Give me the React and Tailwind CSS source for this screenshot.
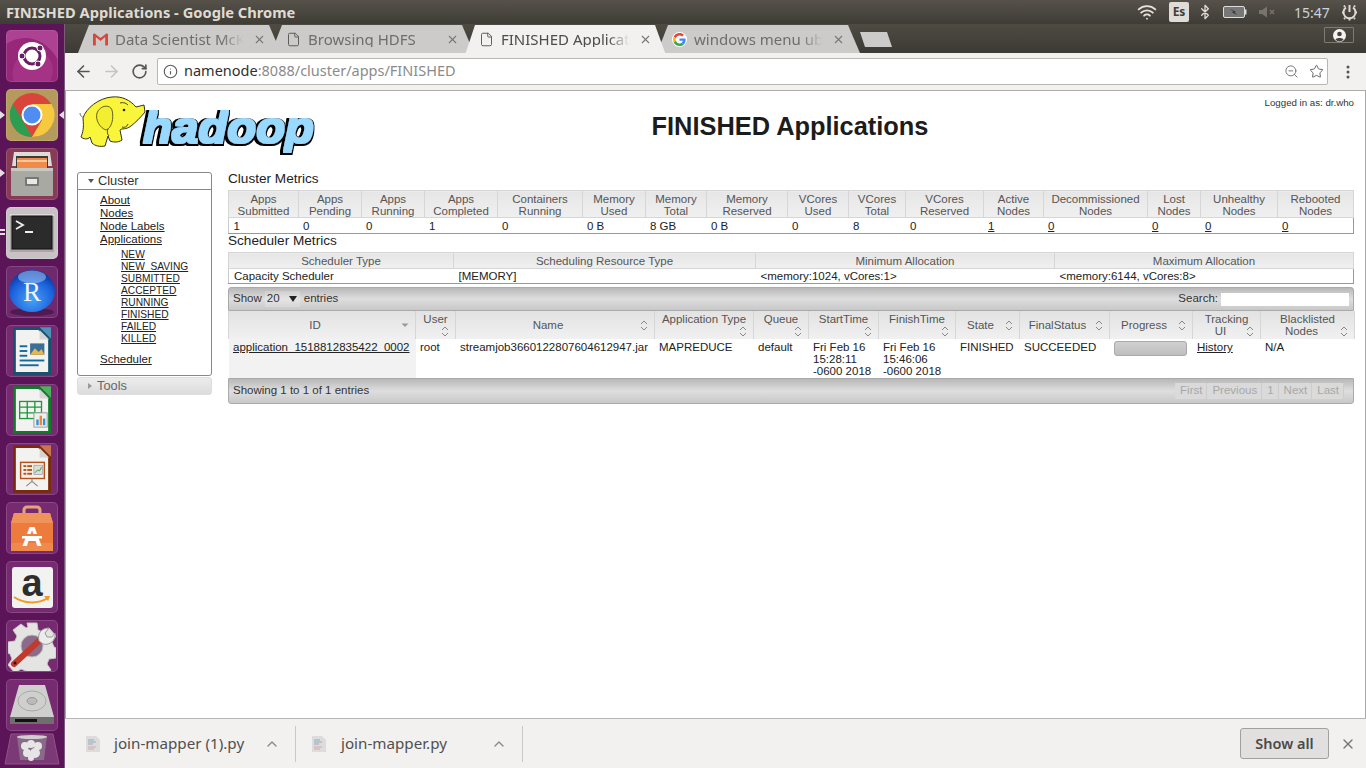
import React from 'react';
import { ArrowLeft, ArrowRight, RotateCw, Info, ZoomOut, Star, X, ChevronUp, File, Bluetooth, Wifi } from 'lucide-react';

const clusterCols = [70, 63, 63, 73, 85, 63, 61, 81, 61, 57, 78, 60, 104, 53, 77, 76];
const clusterHead = [
  ['Apps', 'Submitted'], ['Apps', 'Pending'], ['Apps', 'Running'], ['Apps', 'Completed'], ['Containers', 'Running'],
  ['Memory', 'Used'], ['Memory', 'Total'], ['Memory', 'Reserved'], ['VCores', 'Used'], ['VCores', 'Total'],
  ['VCores', 'Reserved'], ['Active', 'Nodes'], ['Decommissioned', 'Nodes'], ['Lost', 'Nodes'], ['Unhealthy', 'Nodes'], ['Rebooted', 'Nodes'],
];
const clusterRow = ['1', '0', '0', '1', '0', '0 B', '8 GB', '0 B', '0', '8', '0', '1', '0', '0', '0', '0'];

const schedCols = [225, 302, 299, 299];
const appCols = [187, 40, 199, 99, 55, 70, 77, 64, 90, 83, 68, 94];
const appHead = [
  ['ID'], ['User'], ['Name'], ['Application Type'], ['Queue'], ['StartTime'], ['FinishTime'],
  ['State'], ['FinalStatus'], ['Progress'], ['Tracking', 'UI'], ['Blacklisted', 'Nodes'],
];

const sublinks = ['NEW', 'NEW_SAVING', 'SUBMITTED', 'ACCEPTED', 'RUNNING', 'FINISHED', 'FAILED', 'KILLED'];

function SortIcon({ active, middle }) {
  if (active) {
    return <svg width="8" height="10" viewBox="0 0 8 10" className="absolute right-[6px] bottom-[9px]"><path d="M0.5 3.5h7L4 7z" fill="#999" /></svg>;
  }
  return (
    <svg width="8" height="11" viewBox="0 0 8 11" className={`absolute right-[6px] ${middle ? 'bottom-[8px]' : 'bottom-[2px]'}`} fill="none" stroke="#888" strokeWidth="1">
      <path d="M1 4l3-3 3 3M1 7l3 3 3-3" />
    </svg>
  );
}

function Tile({ bg, children }) {
  return (
    <div className={`relative w-[52px] h-[52px] rounded-[5px] flex items-center justify-center overflow-hidden shadow-[inset_0_0_0_1px_rgba(255,255,255,0.14)] ${bg}`}>
      {children}
    </div>
  );
}

function UbuntuIcon() {
  return (
    <svg width="52" height="52" viewBox="0 0 52 52">
      <path d="M0 14C18 2 40 8 52 30V0H0z" fill="#c05aa6" opacity=".55" />
      <path d="M8 52C2 34 16 18 34 22 46 26 50 38 44 52z" fill="#b13f92" opacity=".5" />
      <circle cx="26" cy="26" r="14" fill="#fff" />
      <circle cx="26" cy="26" r="8" fill="none" stroke="#6b1e63" strokeWidth="3" />
      <circle cx="34" cy="18" r="3" fill="#6b1e63" stroke="#fff" />
      <circle cx="16" cy="26" r="3" fill="#6b1e63" stroke="#fff" />
      <circle cx="32" cy="34" r="3" fill="#6b1e63" stroke="#fff" />
    </svg>
  );
}

function ChromeIcon() {
  return (
    <svg width="46" height="46" viewBox="0 0 46 46">
      <circle cx="23" cy="23" r="22" fill="#d9453a" />
      <path d="M23 12h19.500A22 22 0 0 1 23 45L33 28z" fill="#f7c93e" />
      <path d="M3.900 12L14 29l9 16A22 22 0 0 1 3.900 12z" fill="#2c9e52" />
      <circle cx="23" cy="23" r="10.500" fill="#fff" />
      <circle cx="23" cy="23" r="8.500" fill="#4f8ef0" />
    </svg>
  );
}

function FilesIcon() {
  return (
    <svg width="46" height="46" viewBox="0 0 46 46">
      <path d="M5 1h36l2 14H3z" fill="#dcdcd8" />
      <rect x="7" y="5" width="32" height="13" fill="#3d3a38" />
      <rect x="8" y="7" width="30" height="11" fill="#f08a4a" />
      <rect x="8" y="9" width="30" height="2" fill="#f6c79a" />
      <rect x="2" y="17" width="42" height="28" rx="1" fill="#a9a9a4" />
      <rect x="2" y="17" width="42" height="3" fill="#c8c8c3" />
      <rect x="16" y="26" width="14" height="9" rx="1" fill="#777" />
      <rect x="18" y="28" width="10" height="5" fill="#e8e8e6" />
    </svg>
  );
}

function TerminalIcon() {
  return (
    <svg width="44" height="38" viewBox="0 0 44 38">
      <rect x="0" y="0" width="44" height="38" fill="#a9a6a3" />
      <rect x="0" y="0" width="44" height="2" fill="#dcd9d7" />
      <rect x="2" y="2" width="40" height="33" fill="#2b2b2b" stroke="#111" />
      <path d="M6 7l7 4-7 4" fill="none" stroke="#eee" strokeWidth="1.800" />
      <path d="M15 18h8" stroke="#eee" strokeWidth="2" />
    </svg>
  );
}

function RIcon() {
  return (
    <svg width="48" height="50" viewBox="0 0 48 50">
      <defs>
        <radialGradient id="rball" cx="50%" cy="70%" r="65%">
          <stop offset="0%" stopColor="#46a3f7" />
          <stop offset="70%" stopColor="#1c62dc" />
          <stop offset="100%" stopColor="#0c3aa6" />
        </radialGradient>
      </defs>
      <ellipse cx="24" cy="45" rx="22" ry="4" fill="#3a1040" opacity=".6" />
      <ellipse cx="24" cy="24" rx="23" ry="21" fill="url(#rball)" />
      <ellipse cx="24" cy="10" rx="14" ry="6.500" fill="#a5c9f2" opacity=".55" />
      <text x="24" y="34" textAnchor="middle" fontFamily="'Liberation Serif', serif" fontSize="27" fill="#f2f5fa">R</text>
    </svg>
  );
}

function DocShell({ color, corner, children }) {
  return (
    <svg width="38" height="50" viewBox="0 0 40 50">
      <path d="M1.500 1.500h26l11 11v36h-37z" fill="#f2f2f0" stroke={color} strokeWidth="3" />
      <path d="M28 0l12 12V0z" fill={corner} />
      <path d="M28 3v10h10" fill="#d5d5d3" />
      {children}
    </svg>
  );
}

function WriterIcon() {
  return (
    <DocShell color="#13536f" corner="#4d93b5">
      <g fill="#13699a">
        <rect x="7" y="19" width="8" height="2" /><rect x="7" y="24" width="8" height="2" /><rect x="7" y="29" width="8" height="2" />
        <rect x="7" y="34" width="26" height="2" /><rect x="7" y="39" width="20" height="2" />
      </g>
      <rect x="18" y="17" width="15" height="12" fill="#3a6f99" />
      <path d="M18 29l5-7 4 4 3-3 3 6z" fill="#e8b64a" />
    </DocShell>
  );
}

function CalcIcon() {
  return (
    <DocShell color="#0f7a2a" corner="#4cb05e">
      <g fill="none" stroke="#1b9a3a" strokeWidth="1.400">
        <rect x="7" y="16" width="23" height="18" />
        <path d="M7 22h23M7 28h23M15 16v18M23 16v18" />
      </g>
      <rect x="22" y="28" width="14" height="15" fill="#eee" stroke="#999" />
      <rect x="24.500" y="35" width="2.500" height="6" fill="#3a8fd0" />
      <rect x="28" y="31" width="2.500" height="10" fill="#e88a2a" />
      <rect x="31.500" y="34" width="2.500" height="7" fill="#3a8fd0" />
    </DocShell>
  );
}

function ImpressIcon() {
  return (
    <DocShell color="#7a2c08" corner="#c9774a">
      <rect x="8" y="18" width="25" height="17" fill="#f5f0ea" stroke="#b4511c" strokeWidth="1.500" />
      <g fill="#b4511c">
        <rect x="11" y="21" width="3" height="2" /><rect x="15" y="21" width="5" height="2" />
        <rect x="11" y="25" width="3" height="2" /><rect x="15" y="25" width="5" height="2" />
        <rect x="11" y="29" width="3" height="2" /><rect x="15" y="29" width="5" height="2" />
      </g>
      <rect x="22" y="21" width="9" height="10" fill="#ddd" stroke="#888" strokeWidth=".6" />
      <path d="M23 29l3-3 2 1 2-4" fill="none" stroke="#3a9a3a" strokeWidth="1" />
      <path d="M20 35v3M20 38l-6 5M20 38l6 5" stroke="#888" strokeWidth="1.200" />
    </DocShell>
  );
}

function SoftwareIcon() {
  return (
    <svg width="42" height="46" viewBox="0 0 42 46">
      <path d="M13 9V5a3 3 0 0 1 3-3h10a3 3 0 0 1 3 3v4" fill="none" stroke="#e8a37a" strokeWidth="3" />
      <path d="M3 8h36l3 10v28H0V18z" fill="#ed7b3c" />
      <path d="M3 8h36l3 10H0z" fill="#f0935b" />
      <rect x="0" y="38" width="42" height="8" fill="#ef8a4c" />
      <text x="21" y="41" textAnchor="middle" fontFamily="'Liberation Sans', sans-serif" fontWeight="700" fontSize="28" fill="#fff">A</text>
      <rect x="11" y="29" width="20" height="2" fill="#ed7b3c" />
      <rect x="11" y="31" width="20" height="2.500" fill="#fff" />
    </svg>
  );
}

function AmazonIcon() {
  return (
    <div className="w-[41px] h-[41px] rounded-[3px] bg-[#f2f2f0] flex flex-col items-center justify-center relative">
      <span className="font-['Liberation_Sans',sans-serif] font-bold text-[38px] leading-[30px] text-[#2d2d2d] mt-[-8px]">a</span>
      <svg width="38" height="10" viewBox="0 0 38 10" className="absolute bottom-[3px]">
        <path d="M1 2c10 7 24 7 34 1" fill="none" stroke="#f39a1e" strokeWidth="2" />
        <path d="M31 1l6 0-2 5z" fill="#f39a1e" />
      </svg>
    </div>
  );
}

function SettingsIcon() {
  return (
    <svg width="48" height="50" viewBox="0 0 48 50">
      <path d="M19 2h10l1 7 5 2 6-4 7 8-4 6 2 5 2 1v10l-7 1-2 5 4 6-8 6-5-4-5 2-1 3H19l-1-6-5-2-6 4-7-8 4-6-2-5-2-1V21l7-1 2-5-4-6 8-6 5 4 2-1z" fill="#e4e4e2" stroke="#c8c8c6" />
      <circle cx="24" cy="25" r="11" fill="#8c6a8a" stroke="#bdbdbb" />
      <path d="M6 43L33 18" stroke="#c23a2e" strokeWidth="6" strokeLinecap="round" />
      <path d="M31 20c-2-7 2-13 10-13l-4 5 2 4 5 0 3-4c1 7-5 13-12 11z" fill="#ececea" stroke="#999" />
      <circle cx="7" cy="42" r="1.500" fill="#3d0f0b" />
    </svg>
  );
}

function DriveIcon() {
  return (
    <svg width="46" height="44" viewBox="0 0 46 44">
      <path d="M10 2h26l9 32H1z" fill="#cfcfcd" />
      <ellipse cx="23" cy="18" rx="14" ry="10" fill="none" stroke="#aaa" />
      <ellipse cx="23" cy="18" rx="5" ry="3.500" fill="#bbb" stroke="#999" />
      <path d="M1 34h44v7H1z" fill="#6e6e6c" />
      <path d="M6 36h22v3H6z" fill="#111" />
    </svg>
  );
}

function TrashTile() {
  return (
    <div className="relative w-[56px] h-[33px] -mt-[5px]">
      <svg width="56" height="33" viewBox="0 0 56 33">
        <path d="M7 1h42l6 30H1z" fill="#7b3a76" stroke="#8e5288" />
        <path d="M13 3h30l-3 24H16z" fill="#8a6a88" />
        <ellipse cx="28" cy="4" rx="15" ry="2" fill="#cfcfcf" />
        <g fill="#e6e6e6">
          <circle cx="21" cy="13" r="4" /><circle cx="27" cy="11" r="4" /><circle cx="34" cy="13" r="4" />
          <circle cx="23" cy="20" r="4" /><circle cx="31" cy="20" r="5" /><circle cx="27" cy="25" r="3" />
        </g>
      </svg>
    </div>
  );
}

function Launcher() {
  return (
    <div className="relative w-[65px] shrink-0 bg-[#5c1458] border-r border-r-[#7d5b7a] flex flex-col items-center pt-[6px] gap-[7px] overflow-hidden">
      <Tile bg="bg-[#962779]"><UbuntuIcon /></Tile>
      <Tile bg="bg-[#b49a5c]"><ChromeIcon /></Tile>
      <Tile bg="bg-[#893a56]"><FilesIcon /></Tile>
      <Tile bg="bg-[#c8c2c6]"><TerminalIcon /></Tile>
      <Tile bg="bg-[#6e2a6c]"><RIcon /></Tile>
      <Tile bg="bg-[#762a70]"><WriterIcon /></Tile>
      <Tile bg="bg-[#762a70]"><CalcIcon /></Tile>
      <Tile bg="bg-[#762a70]"><ImpressIcon /></Tile>
      <Tile bg="bg-[#762a70]"><SoftwareIcon /></Tile>
      <Tile bg="bg-[#762a70]"><AmazonIcon /></Tile>
      <Tile bg="bg-[#762a70]"><SettingsIcon /></Tile>
      <Tile bg="bg-[#762a70]"><DriveIcon /></Tile>
      <TrashTile />
      {/* running pips */}
      <span className="absolute left-0 top-[87px] w-0 h-0 border-y-[4px] border-y-transparent border-l-[5px] border-l-[#e6e0e4]" />
      <span className="absolute right-0 top-[87px] w-0 h-0 border-y-[4px] border-y-transparent border-r-[5px] border-r-[#e6e0e4]" />
      <span className="absolute left-0 top-[145px] w-0 h-0 border-y-[4px] border-y-transparent border-l-[5px] border-l-[#e6e0e4]" />
      <span className="absolute left-0 top-[205px] w-[5px] h-[2px] bg-[#e6e0e4]" />
      <span className="absolute left-0 top-[209px] w-[5px] h-[2px] bg-[#e6e0e4]" />
    </div>
  );
}

function GmailIcon() {
  return (
    <svg width="15" height="13" viewBox="0 0 16 13" className="shrink-0">
      <path d="M0 1.500h3V13H1a1 1 0 0 1-1-1zM13 13V1.500h3V12a1 1 0 0 1-1 1z" fill="#d6483b" />
      <path d="M0 1.500C0 0 1.600-.3 2.500.5L8 5l5.500-4.500C14.400-.3 16 0 16 1.500L8 8z" fill="#d6483b" />
    </svg>
  );
}

function GoogleIcon() {
  return (
    <span className="w-[15px] h-[15px] rounded-full bg-white flex items-center justify-center shrink-0">
      <svg width="13" height="13" viewBox="0 0 48 48">
        <path fill="#EA4335" d="M24 9.500c3.500 0 6.700 1.200 9.200 3.600l6.900-6.900C35.900 2.400 30.500 0 24 0 14.600 0 6.500 5.400 2.600 13.200l8 6.200C12.500 13.700 17.800 9.500 24 9.500z" />
        <path fill="#4285F4" d="M46.500 24.500c0-1.600-.1-3.100-.4-4.500H24v9h12.700c-.6 2.900-2.200 5.400-4.700 7.100l7.700 6C44.100 38 46.500 31.800 46.500 24.500z" />
        <path fill="#FBBC05" d="M10.500 28.600c-.5-1.400-.8-3-.8-4.600s.3-3.200.8-4.600l-8-6.200C.9 16.500 0 20.100 0 24s.9 7.500 2.600 10.800z" />
        <path fill="#34A853" d="M24 48c6.500 0 11.900-2.100 15.900-5.900l-7.700-6c-2.200 1.400-4.900 2.300-8.200 2.300-6.200 0-11.500-4.200-13.400-9.800l-8 6.200C6.500 42.600 14.600 48 24 48z" />
      </svg>
    </span>
  );
}

function Tab({ icon, title, active, textW = 'w-[138px]' }) {
  return (
    <div className={`relative w-[203px] -mr-[10px] shrink-0 [clip-path:polygon(11px_0,191px_0,203px_100%,0_100%)] flex items-start pl-[15px] pr-[15px] ${active ? 'h-[33px] z-10 bg-[#f2f1f0] text-[#4c4c4c]' : 'h-[28px] bg-[#cdcbc9] text-[#6d6d6d]'}`}>
      <div className="flex items-center gap-[7px] w-[173px] mt-[6px]">
        {icon}
        <span className={`${textW} overflow-hidden whitespace-nowrap text-[15px] leading-[16px] [mask-image:linear-gradient(90deg,#000_82%,transparent_98%)]`}>{title}</span>
        <X size={13} strokeWidth={2} className="text-[#777] ml-auto shrink-0" />
      </div>
    </div>
  );
}

function TitleBar() {
  return (
    <div className="h-[24px] shrink-0 flex items-center bg-gradient-to-b from-[#56524a] to-[#3e3c36] pl-[6px] pr-[8px] text-[#dfdbd2]">
      <span className="font-bold text-[14.700px]">FINISHED Applications - Google Chrome</span>
      <div className="ml-auto flex items-center">
        <Wifi size={20} strokeWidth={2.200} className="text-[#e8e4dc] mr-[12px]" />
        <span className="w-[20px] h-[20px] rounded-[2px] bg-[#dfdcd7] text-[#3f3d38] text-[12px] font-bold flex items-center justify-center mr-[8px]">Es</span>
        <Bluetooth size={16} className="text-[#dfdbd2] mr-[10px]" />
        <svg width="24" height="12" viewBox="0 0 24 12" className="mr-[12px]">
          <rect x=".5" y=".5" width="21" height="11" rx="1.500" fill="#777" stroke="#ddd" />
          <rect x="22" y="3.500" width="1.500" height="5" fill="#ddd" />
          <path d="M7 3l6 3-2 .5L15 9 9 6.500l2-.5z" fill="#222" />
        </svg>
        <svg width="18" height="12" viewBox="0 0 18 12" className="mr-[17px]">
          <path d="M0 4h3l5-3.500v11L3 8H0z" fill="#77746c" />
          <path d="M11 4l4 4M15 4l-4 4" stroke="#77746c" strokeWidth="1.500" />
        </svg>
        <span className="text-[14px] text-[#c8d4de] w-[36px] mr-[11px]">15:47</span>
        <svg width="17" height="17" viewBox="0 0 17 17" fill="none" stroke="#dfdbd2" strokeWidth="2">
          <path d="M5 3.500a6 6 0 1 0 7 0" />
          <path d="M8.500 1v7" />
          <path d="M3 1.500L4 3M14 1.500L13 3M1 8.500h1.500M14.500 8.500H16M3 15l1-1M14 15l-1-1M8.500 15v1.500" />
        </svg>
      </div>
    </div>
  );
}

function ChromeBar() {
  return (
    <div className="shrink-0">
      <div className="h-[29px] bg-gradient-to-b from-[#4e4b43] to-[#3c3a34] flex items-start pt-[1px] pl-[13px] pr-[12px]">
        <Tab title="Data Scientist McKi" textW="w-[139px]" icon={<GmailIcon />} />
        <Tab title="Browsing HDFS" textW="w-[139px]" icon={<File size={15} strokeWidth={1.500} className="shrink-0 text-[#555]" />} />
        <Tab active title="FINISHED Applicati" textW="w-[139px]" icon={<File size={15} strokeWidth={1.500} className="shrink-0 text-[#555]" />} />
        <Tab title="windows menu ubu" textW="w-[137px]" icon={<GoogleIcon />} />
        <span className="ml-[10px] mt-[7px] w-[32px] h-[15px] bg-[#cdcbc9] [clip-path:polygon(0_0,27px_0,32px_100%,5px_100%)]" />
        <span className="ml-auto mt-[2px] w-[30px] h-[16px] rounded-[1px] border border-[#7e7b73] flex items-center justify-center">
          <svg width="13" height="13" viewBox="0 0 13 13">
            <circle cx="6.500" cy="6.500" r="6.500" fill="#f4f3f1" />
            <circle cx="6.500" cy="5" r="2.300" fill="#45433d" />
            <path d="M2.500 10.500c1-2 7-2 8 0a5 5 0 0 1-8 0z" fill="#45433d" />
          </svg>
        </span>
      </div>
      <div className="h-[38px] bg-[#f2f1f0] border-b border-b-[#aeaca8] flex items-center">
        <ArrowLeft size={19} strokeWidth={2} className="text-[#555] ml-[9px]" />
        <ArrowRight size={19} strokeWidth={2} className="text-[#c4c4c4] ml-[9px]" />
        <RotateCw size={17} strokeWidth={2.300} className="text-[#555] ml-[10px]" />
        <div className="ml-[9px] w-[1171px] h-[27px] rounded-[2px] bg-white border border-[#b8b7b4] flex items-center pl-[5px] pr-[3px]">
          <Info size={15} strokeWidth={1.800} className="text-[#5a5a5a] shrink-0" />
          <span className="ml-[6px] -mt-[1px] text-[14.500px] text-[#303030]">namenode<span className="text-[#8b8b8b]">:8088/cluster/apps/FINISHED</span></span>
          <ZoomOut size={15} strokeWidth={1.600} className="ml-auto text-[#777]" />
          <Star size={15} strokeWidth={1.600} className="ml-[10px] text-[#666]" />
        </div>
        <svg width="4" height="14" viewBox="0 0 4 14" className="ml-[18px]" fill="#555">
          <circle cx="2" cy="2" r="1.500" /><circle cx="2" cy="7" r="1.500" /><circle cx="2" cy="12" r="1.500" />
        </svg>
      </div>
    </div>
  );
}

function HadoopLogo() {
  return (
    <svg width="240" height="60" viewBox="78 95 240 60" className="shrink-0">
      <defs>
        {/* fattens the single text element into the blocky outlined wordmark */}
        <filter id="blockText" x="-10%" y="-20%" width="120%" height="140%">
          <feMorphology in="SourceAlpha" operator="dilate" radius="3 2" result="fat" />
          <feOffset in="fat" dx="-1" dy="1" result="fatOff" />
          <feFlood floodColor="#000" />
          <feComposite in2="fatOff" operator="in" result="black" />
          <feMorphology in="SourceGraphic" operator="dilate" radius="1 0.500" result="blue" />
          <feMerge>
            <feMergeNode in="black" />
            <feMergeNode in="blue" />
          </feMerge>
        </filter>
      </defs>
      <text x="143" y="143" filter="url(#blockText)" fontFamily="'Liberation Sans', sans-serif" fontStyle="italic" fontWeight="700" fontSize="44" textLength="171" lengthAdjust="spacingAndGlyphs" fill="#99d9ff">hadoop</text>
      <path d="M83 118c3-10 16-20 29-21 10-1 18 3 24 10l8-2 1 7c-5 6-9 10-14 14-5 4-9 2-11 4l2 10c-4 3-10 2-12 1l-2-5-3 10c-5 1-10 0-13-3l-2-6c-2 3-7 2-9 0 2-5 3-9 2-19z" fill="#f8f53a" stroke="#33331a" strokeWidth="1" />
      <path d="M97 113c3-8 13-9 15-3 2 8 0 18-6 20-6-2-11-10-9-17z" fill="#f4ee30" stroke="#55521a" strokeWidth=".9" />
      <circle cx="124" cy="110" r="1.300" fill="#222" />
      <path d="M120 103c3-1 6 0 8 2M128 124c-1 3-4 4-6 3M109 136c-2-2-2-5-1-7" fill="none" stroke="#333" strokeWidth=".9" />
      <path d="M84 118c-2-1-4-2-4-5" fill="none" stroke="#777" strokeWidth="1" />
    </svg>
  );
}

function Sidebar() {
  return (
    <div className="w-[135px] shrink-0 mt-[1px]">
      <div className="h-[204px] border border-[#888] rounded-[3px]">
        <div className="h-[17px] border-b border-b-[#888] flex items-center text-[12.800px] text-[#333] pl-[10px]">
          <span className="w-0 h-0 border-x-[3px] border-x-transparent border-t-[4px] border-t-[#555] mr-[4px]" />
          Cluster
        </div>
        <div className="pl-[22px] pt-[4px] text-[11.500px] leading-[13px] text-[#222]">
          <div className="underline">About</div>
          <div className="underline">Nodes</div>
          <div className="underline">Node Labels</div>
          <div className="underline">Applications</div>
          <div className="pl-[21px] pt-[3px] text-[10.200px] leading-[12px]">
            {sublinks.map((s) => <div key={s} className="underline">{s}</div>)}
          </div>
          <div className="underline mt-[8px]">Scheduler</div>
        </div>
      </div>
      <div className="mt-[1px] h-[18px] rounded-[3px] border border-[#ddd] bg-gradient-to-b from-[#ececec] to-[#dcdcdc] flex items-center pl-[10px] text-[12.800px] text-[#666]">
        <span className="w-0 h-0 border-y-[3px] border-y-transparent border-l-[4px] border-l-[#999] mr-[5px]" />
        Tools
      </div>
    </div>
  );
}

function MetricsTable({ cols, head, children }) {
  return (
    <table className="table-fixed w-[1125px] border-collapse text-[11.500px]">
      <colgroup>{cols.map((w, i) => <col key={i} style={{ width: w }} />)}</colgroup>
      <thead>
        <tr>{head}</tr>
      </thead>
      <tbody>{children}</tbody>
    </table>
  );
}

function ClusterMetrics() {
  return (
    <MetricsTable
      cols={clusterCols}
      head={clusterHead.map((h) => (
        <th key={h[0] + h[1]} className="h-[27px] p-0 pt-[2px] font-normal text-[#555] leading-[12px] border border-[#d6d6d6] bg-gradient-to-b from-[#e6e6e6] to-[#f0f0f0]">
          {h[0]}<br />{h[1]}
        </th>
      ))}
    >
      <tr className="h-[16px]">
        {clusterRow.map((c, i) => (
          <td key={i} className={`p-0 pl-[4.500px] leading-[14px] text-[#222] border-b border-b-[#999] ${i === 15 ? 'border-r border-r-[#999]' : ''} ${i === 0 ? 'border-l border-l-[#ccc]' : ''}`}>
            {i > 10 ? <span className="underline">{c}</span> : c}
          </td>
        ))}
      </tr>
    </MetricsTable>
  );
}

function SchedulerMetrics() {
  const row = ['Capacity Scheduler', '[MEMORY]', '<memory:1024, vCores:1>', '<memory:6144, vCores:8>'];
  const head = ['Scheduler Type', 'Scheduling Resource Type', 'Minimum Allocation', 'Maximum Allocation'];
  return (
    <MetricsTable
      cols={schedCols}
      head={head.map((h) => (
        <th key={h} className="h-[16px] p-0 pt-[1px] font-normal text-[#555] leading-[13px] border border-[#d6d6d6] bg-gradient-to-b from-[#e6e6e6] to-[#f0f0f0]">{h}</th>
      ))}
    >
      <tr className="h-[15px]">
        {row.map((c, i) => (
          <td key={c} className={`p-0 pl-[5px] leading-[14px] text-[#222] border-b border-b-[#999] ${i === 3 ? 'border-r border-r-[#999]' : ''} ${i === 0 ? 'border-l border-l-[#ccc]' : ''}`}>{c}</td>
        ))}
      </tr>
    </MetricsTable>
  );
}

function ToolbarBar({ className, children }) {
  return (
    <div className={`w-[1126px] flex items-center text-[11.500px] text-[#333] border border-[#aaa] bg-gradient-to-b from-[#b8b8b8] via-[#dedede] to-[#c8c8c8] ${className}`}>
      {children}
    </div>
  );
}

function AppsTable() {
  return (
    <div className="mt-[3px]">
      <ToolbarBar className="h-[24px] rounded-t-[3px] px-[4px]">
        <span>Show</span>
        <span className="ml-[3px] w-[35px] h-[16px] flex items-center pl-[2px] bg-white/20">
          20
          <span className="ml-auto mr-[3px] w-0 h-0 border-x-[4px] border-x-transparent border-t-[6px] border-t-[#222]" />
        </span>
        <span className="ml-[4px]">entries</span>
        <span className="ml-auto">Search:</span>
        <span className="ml-[3px] w-[128px] h-[13px] bg-white" />
      </ToolbarBar>
      <table className="table-fixed w-[1126px] border-collapse text-[11.500px]">
        <colgroup>{appCols.map((w, i) => <col key={i} style={{ width: w }} />)}</colgroup>
        <thead>
          <tr>
            {appHead.map((h, i) => {
              const two = h.length > 1;
              const top = ['Application Type', 'Queue', 'StartTime', 'FinishTime', 'User'].includes(h[0]);
              const middle = !two && !top;
              return (
                <th key={h[0]} className={`relative h-[28px] p-0 font-normal text-[#555] border-x border-x-[#d6d6d6] bg-gradient-to-b from-[#e2e2e2] to-[#f0f0f0] leading-[12px] ${two || top ? 'align-top pt-[2px]' : 'align-middle'} ${i === 0 || i === 2 || (i >= 7 && i <= 9) ? 'pr-[14px]' : ''}`}>
                  {h[0]}
                  {two && <br />}
                  {two && <span className="inline-block pr-[12px]">{h[1]}</span>}
                  <SortIcon active={i === 0} middle={middle} />
                </th>
              );
            })}
          </tr>
        </thead>
        <tbody>
          <tr className="h-[39px] align-top text-[#222] leading-[12px]">
            <td className="p-0 pl-[4.500px] pt-[2px] bg-[#f2f2f2]"><span className="underline">application_1518812835422_0002</span></td>
            <td className="p-0 pl-[4.500px] pt-[2px]">root</td>
            <td className="p-0 pl-[4.500px] pt-[2px] whitespace-nowrap">streamjob3660122807604612947.jar</td>
            <td className="p-0 pl-[4.500px] pt-[2px]">MAPREDUCE</td>
            <td className="p-0 pl-[4.500px] pt-[2px]">default</td>
            <td className="p-0 pl-[4.500px] pt-[2px]">Fri Feb 16 15:28:11 -0600 2018</td>
            <td className="p-0 pl-[4.500px] pt-[2px]">Fri Feb 16 15:46:06 -0600 2018</td>
            <td className="p-0 pl-[4.500px] pt-[2px]">FINISHED</td>
            <td className="p-0 pl-[4.500px] pt-[2px]">SUCCEEDED</td>
            <td className="p-0 pl-[4px] pt-[1.500px]">
              <div className="w-[73px] h-[15px] rounded-[3px] border border-[#aaa] bg-gradient-to-b from-[#d0d0d0] to-[#bebebe]" />
            </td>
            <td className="p-0 pl-[4.500px] pt-[2px]"><span className="underline">History</span></td>
            <td className="p-0 pl-[4.500px] pt-[2px]">N/A</td>
          </tr>
        </tbody>
      </table>
      <ToolbarBar className="h-[26px] rounded-b-[3px] pl-[4px] pr-[9px]">
        <span>Showing 1 to 1 of 1 entries</span>
        <div className="ml-auto flex items-center text-[#a8a8a8]">
          {['First', 'Previous', '1', 'Next', 'Last'].map((p) => (
            <span key={p} className="h-[16px] px-[5px] flex items-center rounded-[1px] bg-[#dadada] shadow-[inset_-1px_0_0_#cdcdcd]">{p}</span>
          ))}
        </div>
      </ToolbarBar>
    </div>
  );
}

function DownloadItem({ name, width, pad, gap }) {
  return (
    <div className={`flex items-center h-[36px] border-r border-r-[#c8c8c6] ${pad}`} style={{ width }}>
      <svg width="14" height="16" viewBox="0 0 14 16" className="shrink-0">
        <path d="M0 0h10l4 4v12H0z" fill="#dcdcdc" />
        <path d="M2 4h6M2 6h8M2 8h5" stroke="#9ab" />
        <path d="M2 11h8M2 13h6" stroke="#d8a8a8" />
      </svg>
      <span className={`${gap} text-[15.200px] text-[#4f4f4f] whitespace-nowrap`}>{name}</span>
      <ChevronUp size={16} strokeWidth={2} className="ml-auto mr-[15px] text-[#888]" />
    </div>
  );
}

function DownloadBar() {
  return (
    <div className="h-[50px] shrink-0 bg-[#f2f1f0] border-t border-t-[#b5b5b3] flex items-center">
      <DownloadItem name="join-mapper (1).py" width={231} pad="pl-[21px]" gap="ml-[14px]" />
      <DownloadItem name="join-mapper.py" width={227} pad="pl-[16px]" gap="ml-[15px]" />
      <button className="ml-auto h-[31px] w-[89px] rounded-[3px] border border-[#a0a09e] bg-[#e1e0de] text-[14.500px] font-semibold text-[#4a4a4a]">Show all</button>
      <X size={16} strokeWidth={2} className="ml-[11px] mr-[10px] text-[#777]" />
    </div>
  );
}

export default function App() {
  return (
    <div className="w-[1366px] h-[768px] overflow-hidden flex flex-col font-['Noto_Sans',sans-serif]">
      <TitleBar />
      <div className="flex-1 flex min-h-0">
        <Launcher />
        <div className="flex-1 min-w-0 flex flex-col">
          <ChromeBar />
          <div className="flex-1 min-h-0 bg-white border-x border-x-[#a8a8a8] font-['Liberation_Sans',sans-serif] text-[#222]">
            <div className="flex h-[80px] pl-[12px]">
              <div className="pt-[4px]"><HadoopLogo /></div>
              <h1 className="w-[944px] pt-[19px] text-center text-[25.400px] leading-[32px] font-bold text-[#1c1c1c] whitespace-nowrap">FINISHED Applications</h1>
              <div className="flex-1 pt-[6px] pr-[11px] text-right text-[9.700px] leading-[12px] whitespace-nowrap text-[#333]">Logged in as: dr.who</div>
            </div>
            <div className="flex pl-[11px] gap-[16px]">
              <Sidebar />
              <div>
                <div className="text-[13.600px] leading-[16px] h-[19px] text-[#222]">Cluster Metrics</div>
                <ClusterMetrics />
                <div className="text-[13.600px] leading-[14px] h-[18px] text-[#222]">Scheduler Metrics</div>
                <SchedulerMetrics />
                <AppsTable />
              </div>
            </div>
          </div>
          <DownloadBar />
        </div>
      </div>
    </div>
  );
}
